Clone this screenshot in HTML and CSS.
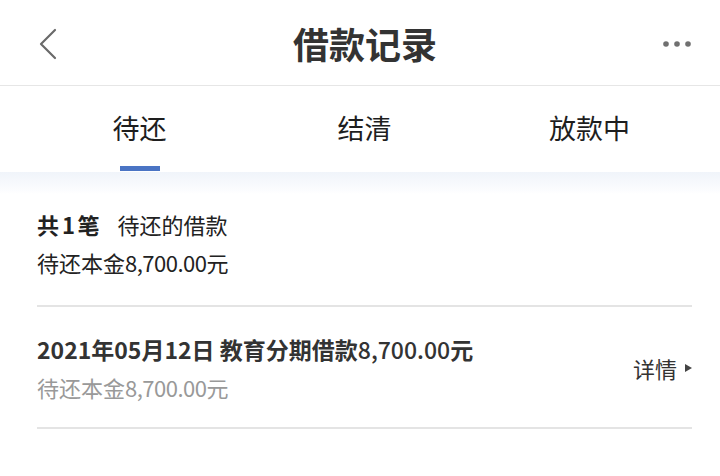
FILE: index.html
```html
<!DOCTYPE html>
<html lang="zh-CN">
<head>
<meta charset="utf-8">
<title>借款记录</title>
<link rel="stylesheet" href="styles.css">
</head>
<body>
<div class="page">
  <header class="nav">
    <div class="nav-back">
      <svg width="20" height="32" viewBox="0 0 20 32"><polyline points="17,2 3,16 17,30" fill="none" stroke="#6a6a6a" stroke-width="2.2" stroke-linecap="round" stroke-linejoin="round"/></svg>
    </div>
    <h1 class="nav-title">借款记录</h1>
    <div class="nav-more">
      <svg width="30" height="8" viewBox="0 0 30 8"><circle cx="4" cy="4" r="2.8" fill="#707070"/><circle cx="15" cy="4" r="2.8" fill="#707070"/><circle cx="26" cy="4" r="2.8" fill="#707070"/></svg>
    </div>
  </header>
  <nav class="tabs">
    <div class="tab active"><span class="tab-label">待还</span><span class="tab-bar"></span></div>
    <div class="tab"><span class="tab-label">结清</span><span class="tab-bar"></span></div>
    <div class="tab"><span class="tab-label">放款中</span><span class="tab-bar"></span></div>
  </nav>
  <div class="band"></div>
  <section class="summary">
    <div class="summary-line"><span class="count">共<span class="num">1</span>笔</span><span class="summary-desc">待还的借款</span></div>
    <div class="summary-line">待还本金<span class="num">8,700.00</span>元</div>
  </section>
  <section class="record">
    <div class="record-main">
      <div class="record-title">2021年05月12日 教育分期借款<span class="num light">8,700.00</span>元</div>
      <div class="record-sub">待还本金<span class="num">8,700.00</span>元</div>
    </div>
    <div class="record-detail">详情<span class="tri"></span></div>
  </section>
</div>
</body>
</html>
```
FILE: styles.css
```css
* { box-sizing: border-box; }
html, body { margin: 0; padding: 0; background: #fff; }
body {
  font-family: "Noto Sans CJK SC", "Noto Sans", sans-serif;
  color: #222;
  width: 720px;
  height: 476px;
  overflow: hidden;
}
.page { width: 720px; }
.nav {
  height: 86px;
  border-bottom: 1px solid #e6e6e6;
  display: flex;
  align-items: center;
  justify-content: space-between;
  padding: 8px 28px 0 38px;
}
.nav-back { width: 60px; display: flex; align-items: center; margin-top: -6px; }
.nav-more { width: 60px; display: flex; justify-content: flex-end; margin-top: -6px; }
.nav-title {
  margin: 0 0 8px 0;
  font-size: 36px;
  font-weight: 700;
  color: #333;
  line-height: 40px;
}
.tabs {
  display: flex;
  padding: 0 18px 0 27px;
  height: 86px;
}
.tab {
  flex: 1;
  display: flex;
  flex-direction: column;
  align-items: center;
  padding-top: 22px;
}
.tab-label {
  font-size: 27px;
  line-height: 40px;
  font-weight: 400;
  color: #1e1e1e;
}
.tab-bar {
  margin-top: 18px;
  width: 40px;
  height: 5px;
  background: transparent;
}
.tab.active .tab-bar { background: #4a74c4; }
.band {
  height: 22px;
  background: linear-gradient(#f0f4fa, #fbfcfe 80%, #fff);
}
.summary {
  margin: 0 28px 0 37px;
  padding: 11px 0 24px;
  border-bottom: 2px solid #e4e4e4;
}
.summary-line {
  font-size: 22px;
  line-height: 38px;
  color: #222;
}
.count { font-weight: 700; margin-right: 18px; }
.count .num { margin: 0 3px; font-weight: 600; }
.num { letter-spacing: -0.5px; }
.record {
  margin: 0 28px 0 37px;
  padding: 23px 0 21px;
  border-bottom: 2px solid #e4e4e4;
  display: flex;
  align-items: center;
  justify-content: space-between;
}
.record-title {
  font-size: 23px;
  line-height: 38px;
  font-weight: 600;
  color: #333;
}
.record-title .light { font-weight: 500; letter-spacing: 0; }
.record-sub {
  font-size: 22px;
  line-height: 38px;
  color: #999;
}
.record-detail {
  font-size: 22px;
  line-height: 38px;
  color: #333;
  display: flex;
  align-items: center;
}
.tri {
  margin-left: 8px;
  width: 0;
  height: 0;
  border-top: 4px solid transparent;
  border-bottom: 4px solid transparent;
  border-left: 7px solid #444;
}
```
